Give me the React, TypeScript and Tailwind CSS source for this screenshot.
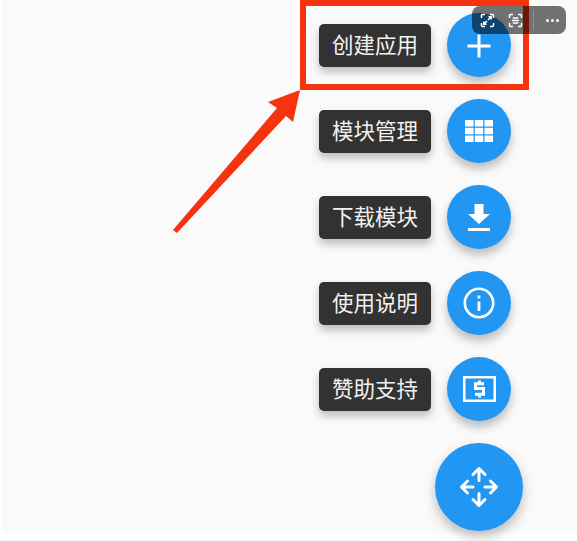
import type { ReactNode } from "react";

function AddIcon() {
  return (
    <svg className="mt-[2px]" width="24" height="24" viewBox="0 0 24 24" fill="#fff">
      <path d="M10.500 .5h3v10h10v3h-10v10h-3v-10H.5v-3h10z" />
    </svg>
  );
}

function GridIcon() {
  return (
    <svg width="28" height="22" viewBox="0 0 28 22" fill="#fff">
      <path d="M0 0h8.500v6.500H0zM9.750 0h8.500v6.500h-8.500zM19.500 0H28v6.500h-8.500zM0 7.750h8.500v6.500H0zM9.750 7.750h8.500v6.500h-8.500zM19.500 7.750H28v6.500h-8.500zM0 15.500h8.500V22H0zM9.750 15.500h8.500V22h-8.500zM19.500 15.500H28V22h-8.500z" />
    </svg>
  );
}

function DownloadIcon() {
  return (
    <svg width="22" height="27" viewBox="0 0 22 27" fill="#fff">
      <path d="M6.500 0h9v10H22L11 20 0 10h6.500zM0 24h22v3H0z" />
    </svg>
  );
}

function InfoIcon() {
  return (
    <svg width="32" height="32" viewBox="0 0 32 32" fill="none">
      <circle cx="16" cy="16" r="14.200" stroke="#fff" strokeWidth="2.600" />
      <path d="M14.600 14.500h2.800V24h-2.800zM14.600 8.500h2.800v3h-2.800z" fill="#fff" />
    </svg>
  );
}

function MoneyIcon() {
  return (
    <svg width="33" height="26" viewBox="0 0 33 26" fill="none">
      <rect x="1.250" y="1.250" width="30.500" height="23.500" stroke="#fff" strokeWidth="2.500" />
      <path
        d="M21 7.800h-8.500v4.700h8v5.700H12M16.500 4.500v3.300M16.500 18.200v3.300"
        stroke="#fff"
        strokeWidth="3"
      />
    </svg>
  );
}

function MoveIcon() {
  return (
    <svg width="40" height="42" viewBox="0 0 40 42" fill="none" stroke="#fff" strokeWidth="3" strokeLinecap="round" strokeLinejoin="round">
      <path d="M20 2.500v12M14 8.500l6-6 6 6" />
      <path d="M20 27.500v12M14 33.500l6 6 6-6" />
      <path d="M2.500 21h11.500M8.500 15l-6 6 6 6" />
      <path d="M26 21h11.500M31.500 15l6 6-6 6" />
    </svg>
  );
}

function ActionRow({ label, children }: { label: string; children: ReactNode }) {
  return (
    <div className="flex items-center gap-4">
      <div className="flex h-[43px] w-[112px] items-center justify-center rounded-[5px] bg-[#323232] pb-[3px] text-[21.500px] leading-none text-[#f2f2f2] shadow-[0_5px_8px_rgba(0,0,0,0.25)]">
        {label}
      </div>
      <div className="flex h-16 w-16 items-center justify-center rounded-full bg-[#2196f3] shadow-[0_6px_10px_rgba(0,0,0,0.25)]">
        {children}
      </div>
    </div>
  );
}

export default function App() {
  return (
    <div className="relative h-[541px] w-[577px] overflow-hidden bg-white font-['Noto_Sans_CJK_SC',sans-serif]">
      <div className="ml-px flex h-[533px] flex-col items-end gap-[22px] rounded-bl-[6px] bg-[#fafafa] pr-[66px] pt-[13px]">
        <ActionRow label="创建应用">
          <AddIcon />
        </ActionRow>
        <ActionRow label="模块管理">
          <GridIcon />
        </ActionRow>
        <ActionRow label="下载模块">
          <DownloadIcon />
        </ActionRow>
        <ActionRow label="使用说明">
          <InfoIcon />
        </ActionRow>
        <ActionRow label="赞助支持">
          <MoneyIcon />
        </ActionRow>
        <div className="-mr-3 flex h-[88px] w-[88px] items-center justify-center rounded-full bg-[#2196f3] shadow-[0_6px_12px_rgba(0,0,0,0.25)]">
          <MoveIcon />
        </div>
      </div>
      <div className="mx-[2px] mt-[6px] h-[2px] w-[355px] bg-[#f8f8f8]" />

      {/* annotation drawn on top of the screenshot */}
      <div className="absolute left-[300px] top-0 h-[90px] w-[229px] border-[6px] border-[#f5330f]" />
      <svg className="absolute left-0 top-0" width="577" height="541" fill="#f5330f">
        <path d="M173 230 277 108 268 102 300 90 293 122 286 116 177 233z" />
      </svg>

      <div className="absolute left-[472px] top-[6px] flex h-[28px] w-[94px] items-center rounded-lg bg-black/55 pl-[8px]">
        <svg width="15" height="15" viewBox="0 0 15 15" fill="none" stroke="#fff" strokeWidth="1.500">
          <path d="M5 1.500H2.500a1 1 0 0 0-1 1V5M10 1.500h2.500a1 1 0 0 1 1 1V5M1.500 10v2.500a1 1 0 0 0 1 1H5M13.500 10v2.500a1 1 0 0 1-1 1H10" />
          <path d="M8.500 3.800h2.700v2.700M11.200 3.800 8 7M3.800 8.500v2.700h2.700M3.800 11.200 7 8" />
        </svg>
        <svg className="ml-[13px]" width="15" height="15" viewBox="0 0 15 15" fill="none" stroke="#fff" strokeWidth="1.500">
          <path d="M5 1.500H2.500a1 1 0 0 0-1 1V5M10 1.500h2.500a1 1 0 0 1 1 1V5M1.500 10v2.500a1 1 0 0 0 1 1H5M13.500 10v2.500a1 1 0 0 1-1 1H10" />
          <path d="M4 7.500h7M4.800 5h5.400M4.800 10h5.400" />
        </svg>
        <div className="ml-[10px] h-[20px] w-px bg-white/20" />
        <div className="ml-[12px] flex gap-[2px]">
          <span className="h-[3px] w-[3px] rounded-full bg-white" />
          <span className="h-[3px] w-[3px] rounded-full bg-white" />
          <span className="h-[3px] w-[3px] rounded-full bg-white" />
        </div>
      </div>
    </div>
  );
}
